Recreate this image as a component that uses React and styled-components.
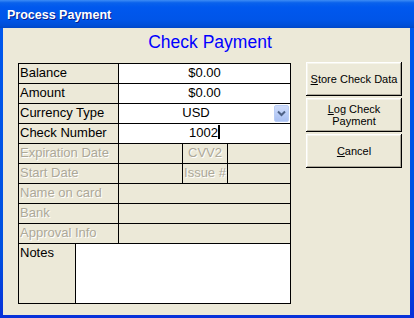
import React from "react";
import styled, { createGlobalStyle } from "styled-components";

const GlobalStyle = createGlobalStyle`
  html, body {
    margin: 0;
    padding: 0;
    background: #ece9d8;
    font-family: "Liberation Sans", Arial, sans-serif;
  }
`;

const Window = styled.div`
  width: 414px;
  height: 318px;
  display: flex;
  flex-direction: column;
  background: linear-gradient(to bottom, #0058ee 0%, #0050e0 80%, #0831d9 100%);
  box-sizing: border-box;
  overflow: hidden;
`;

const TitleBar = styled.div`
  height: 28px;
  flex: none;
  display: flex;
  align-items: center;
  padding-left: 7px;
  background: linear-gradient(
    to bottom,
    #3d8cf5 0%,
    #0a62ec 10%,
    #0058ee 25%,
    #0055e8 70%,
    #004fd8 90%,
    #0047c8 100%
  );
`;

const Title = styled.span`
  color: #fff;
  font-weight: bold;
  font-size: 12.5px;
  text-shadow: 1px 1px #0a1e8c;
  padding-top: 1px;
`;

const Content = styled.div`
  flex: 1;
  margin: 0 4px 3px 3px;
  background: #ece9d8;
  padding: 4px 8px 0 15px;
`;

const Heading = styled.h1`
  margin: 0 0 10px;
  font-size: 17.5px;
  font-weight: normal;
  line-height: 20px;
  color: #0000ff;
  text-align: center;
`;

const Body = styled.div`
  display: flex;
  gap: 15px;
  align-items: flex-start;
`;

const Table = styled.div`
  width: 273px;
  box-sizing: border-box;
  margin-top: 1px;
  padding: 1px;
  background: #000;
  display: flex;
  flex-direction: column;
  gap: 1px;
`;

const Row = styled.div`
  display: grid;
  grid-template-columns: ${(p) => p.$cols || "99px 1fr"};
  gap: 1px;
  height: ${(p) => p.$h || 19}px;
`;

const Cell = styled.div`
  background: ${(p) => (p.$white ? "#fff" : "#ece9d8")};
  color: ${(p) => (p.$disabled ? "#aca899" : "#000")};
  text-shadow: ${(p) => (p.$disabled ? "1px 1px #fff" : "none")};
  font-size: 13px;
  line-height: 17px;
  padding: 0 1px;
  text-align: ${(p) => (p.$center ? "center" : "left")};
  white-space: nowrap;
  overflow: hidden;
`;

const SelectCell = styled.div`
  background: #fff;
  display: flex;
  align-items: flex-start;
  font-size: 13px;
  line-height: 17px;
`;

const SelectText = styled.span`
  flex: 1;
  text-align: center;
`;

const DropButton = styled.span`
  width: 15px;
  height: 17px;
  margin: 1px;
  box-sizing: border-box;
  border: 1px solid #b9cdf5;
  border-radius: 2px;
  background: linear-gradient(to bottom, #cfdcfb 0%, #b7cbf6 60%, #a9c0f2 100%);
  display: flex;
  align-items: center;
  justify-content: center;
`;

const Caret = styled.span`
  display: inline-block;
  width: 2px;
  height: 14px;
  background: #000;
  vertical-align: -2px;
`;

const Buttons = styled.div`
  width: 96px;
  display: flex;
  flex-direction: column;
  gap: 2px;
`;

const Button = styled.button`
  height: 34px;
  border: none;
  background: #ece9d8;
  box-shadow: inset -1px -1px #000, inset 1px 1px #fff, inset -2px -2px #aca899,
    inset 2px 2px #f5f4ea;
  font-family: "Liberation Sans", Arial, sans-serif;
  font-size: 11px;
  line-height: 12px;
  color: #000;
  padding: 0 4px;
  text-align: center;
`;

function App() {
  return (
    <>
      <GlobalStyle />
      <Window>
        <TitleBar>
          <Title>Process Payment</Title>
        </TitleBar>
        <Content>
          <Heading>Check Payment</Heading>
          <Body>
            <Table>
              <Row>
                <Cell>Balance</Cell>
                <Cell $white $center>$0.00</Cell>
              </Row>
              <Row>
                <Cell>Amount</Cell>
                <Cell $white $center>$0.00</Cell>
              </Row>
              <Row>
                <Cell>Currency Type</Cell>
                <SelectCell>
                  <SelectText>USD</SelectText>
                  <DropButton>
                    <svg width="9" height="7" viewBox="0 0 9 7">
                      <polyline
                        points="1,1.5 4.5,5 8,1.5"
                        fill="none"
                        stroke="#4d6185"
                        strokeWidth="2"
                      />
                    </svg>
                  </DropButton>
                </SelectCell>
              </Row>
              <Row>
                <Cell>Check Number</Cell>
                <Cell $white $center>
                  1002<Caret />
                </Cell>
              </Row>
              <Row $cols="99px 63px 44px 1fr">
                <Cell $disabled>Expiration Date</Cell>
                <Cell />
                <Cell $disabled $center>CVV2</Cell>
                <Cell />
              </Row>
              <Row $cols="99px 63px 44px 1fr">
                <Cell $disabled>Start Date</Cell>
                <Cell />
                <Cell $disabled $center>Issue #</Cell>
                <Cell />
              </Row>
              <Row>
                <Cell $disabled>Name on card</Cell>
                <Cell />
              </Row>
              <Row>
                <Cell $disabled>Bank</Cell>
                <Cell />
              </Row>
              <Row>
                <Cell $disabled>Approval Info</Cell>
                <Cell />
              </Row>
              <Row $cols="56px 1fr" $h={59}>
                <Cell>Notes</Cell>
                <Cell $white />
              </Row>
            </Table>
            <Buttons>
              <Button>
                <u>S</u>tore Check Data
              </Button>
              <Button>
                <u>L</u>og Check
                <br />
                Payment
              </Button>
              <Button>
                <u>C</u>ancel
              </Button>
            </Buttons>
          </Body>
        </Content>
      </Window>
    </>
  );
}

export default App;
